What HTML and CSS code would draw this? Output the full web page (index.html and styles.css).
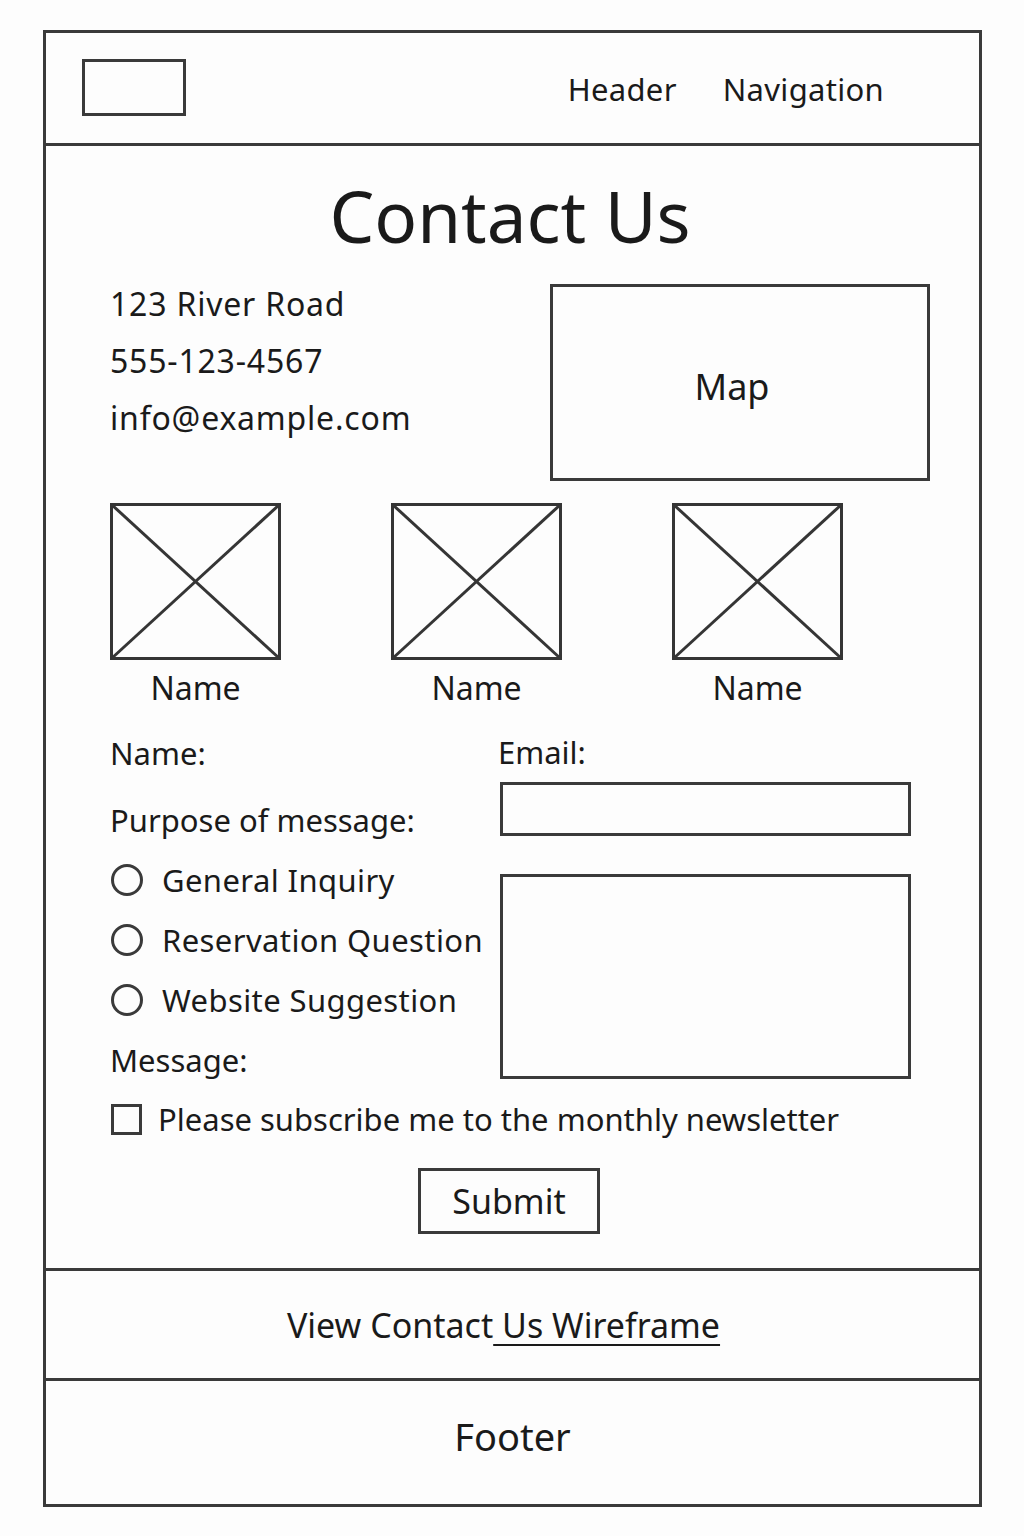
FILE: index.html
```html
<!DOCTYPE html>
<html lang="en">
<head>
  <meta charset="UTF-8">
  <title>Contact Us Wireframe</title>
  <link rel="stylesheet" href="styles.css">
</head>
<body>

  <div class="frame">

    <!-- Шапка -->
    <header class="top">
      <div class="logo"></div>
      <nav class="nav">
        <span>Header</span>
        <span>Navigation</span>
      </nav>
    </header>

    <!-- Основной блок -->
    <main class="main">
      <h1 class="title">Contact Us</h1>

      <div class="contact-row">
        <div class="info">
          <div>123 River Road</div>
          <div>555-123-4567</div>
          <div>info@example.com</div>
        </div>
        <div class="map">Map</div>
      </div>

      <div class="team">
        <div class="member">
          <svg class="photo" viewBox="0 0 171 157" preserveAspectRatio="none">
            <rect x="1.5" y="1.5" width="168" height="154" />
            <line x1="1.5" y1="1.5" x2="169.5" y2="155.5" />
            <line x1="169.5" y1="1.5" x2="1.5" y2="155.5" />
          </svg>
          <div class="member-name">Name</div>
        </div>
        <div class="member">
          <svg class="photo" viewBox="0 0 171 157" preserveAspectRatio="none">
            <rect x="1.5" y="1.5" width="168" height="154" />
            <line x1="1.5" y1="1.5" x2="169.5" y2="155.5" />
            <line x1="169.5" y1="1.5" x2="1.5" y2="155.5" />
          </svg>
          <div class="member-name">Name</div>
        </div>
        <div class="member">
          <svg class="photo" viewBox="0 0 171 157" preserveAspectRatio="none">
            <rect x="1.5" y="1.5" width="168" height="154" />
            <line x1="1.5" y1="1.5" x2="169.5" y2="155.5" />
            <line x1="169.5" y1="1.5" x2="1.5" y2="155.5" />
          </svg>
          <div class="member-name">Name</div>
        </div>
      </div>

      <form class="form">
        <div class="form-left">
          <div class="line name-line">Name:</div>
          <div class="line">Purpose of message:</div>
          <label class="line radio-line"><span class="radio"></span>General Inquiry</label>
          <label class="line radio-line"><span class="radio"></span>Reservation Question</label>
          <label class="line radio-line"><span class="radio"></span>Website Suggestion</label>
          <div class="line">Message:</div>
        </div>
        <div class="form-right">
          <div class="email-label">Email:</div>
          <div class="input"></div>
          <div class="textarea"></div>
        </div>
      </form>

      <label class="subscribe"><span class="check"></span>Please subscribe me to the monthly newsletter</label>

      <div class="actions">
        <button class="submit" type="button">Submit</button>
      </div>
    </main>

    <!-- Ссылка -->
    <section class="link-row">
      <span>View Contact<a href="#" class="link"> Us Wireframe</a></span>
    </section>

    <!-- Подвал -->
    <footer class="footer">Footer</footer>

  </div>

</body>
</html>
```

FILE: styles.css
```css
* {
  box-sizing: border-box;
}

body {
  margin: 0;
  padding: 0;
  background: #fdfdfd;
  color: #1a1a1a;
  font-family: "Noto Sans", sans-serif;
  font-size: 31px;
}

/* Общая рамка */
.frame {
  width: 939px;
  margin: 30px 0 0 43px;
  border: 3px solid #3a3a3a;
}

/* Шапка */
.top {
  height: 113px;
  display: flex;
  align-items: flex-start;
  justify-content: space-between;
  border-bottom: 3px solid #3a3a3a;
  padding: 0 95px 0 36px;
}

.logo {
  width: 104px;
  height: 57px;
  margin-top: 26px;
  border: 3px solid #3a3a3a;
}

.nav {
  display: flex;
  gap: 46px;
  font-size: 31px;
  line-height: 40px;
  margin-top: 36px;
  letter-spacing: 0.3px;
}

/* Основной блок */
.main {
  padding: 0 49px 34px 64px;
}

.title {
  margin: 30px 0 0;
  font-size: 71px;
  font-weight: normal;
  line-height: 79px;
  text-align: center;
  padding-right: 20px;
}

.contact-row {
  display: flex;
  justify-content: space-between;
  margin-top: 20px;
}

.info {
  line-height: 57px;
  font-size: 32px;
  letter-spacing: 0.8px;
}

.map {
  width: 380px;
  height: 197px;
  margin-top: 9px;
  border: 3px solid #3a3a3a;
  display: flex;
  align-items: center;
  justify-content: center;
  font-size: 36px;
  padding: 8px 16px 0 0;
}

/* Карточки */
.team {
  display: grid;
  grid-template-columns: repeat(3, 171px);
  column-gap: 110px;
  margin-top: 22px;
}

.photo {
  display: block;
  width: 171px;
  height: 157px;
  fill: none;
  stroke: #353535;
  stroke-width: 3;
}

.member-name {
  margin-top: 10px;
  line-height: 36px;
  text-align: center;
  font-size: 32px;
}

/* Форма */
.form {
  display: grid;
  grid-template-columns: 388px 413px;
  margin-top: 17px;
}

.line {
  display: flex;
  align-items: center;
  height: 60px;
}

.radio-line {
  letter-spacing: 0.4px;
}

.name-line {
  margin-bottom: 7px;
}

.radio {
  width: 32px;
  height: 32px;
  border: 3px solid #3a3a3a;
  border-radius: 50%;
  margin: 0 19px 0 1px;
}

.email-label {
  line-height: 58px;
}

.input {
  height: 54px;
  border: 3px solid #3a3a3a;
  margin: 1px 0 38px 2px;
}

.textarea {
  height: 205px;
  border: 3px solid #3a3a3a;
  margin-left: 2px;
}

.subscribe {
  display: flex;
  align-items: center;
  height: 58px;
}

.check {
  width: 31px;
  height: 31px;
  border: 3px solid #3a3a3a;
  margin: 0 16px 0 1px;
}

.actions {
  display: flex;
  justify-content: center;
  margin-top: 20px;
}

.submit {
  width: 182px;
  height: 66px;
  background: transparent;
  border: 3px solid #3a3a3a;
  font-family: inherit;
  font-size: 34px;
  color: #1a1a1a;
  cursor: pointer;
  margin-right: 22px;
}

/* Ссылка и подвал */
.link-row {
  height: 113px;
  border-top: 3px solid #3a3a3a;
  border-bottom: 3px solid #3a3a3a;
  display: flex;
  align-items: center;
  justify-content: center;
  font-size: 34px;
  white-space: pre;
  padding-right: 18px;
}

.link {
  color: inherit;
  text-decoration: underline;
  text-underline-offset: 6px;
  text-decoration-thickness: 2px;
}

.footer {
  height: 123px;
  display: flex;
  align-items: center;
  justify-content: center;
  font-size: 38px;
  padding-bottom: 14px;
}
```
